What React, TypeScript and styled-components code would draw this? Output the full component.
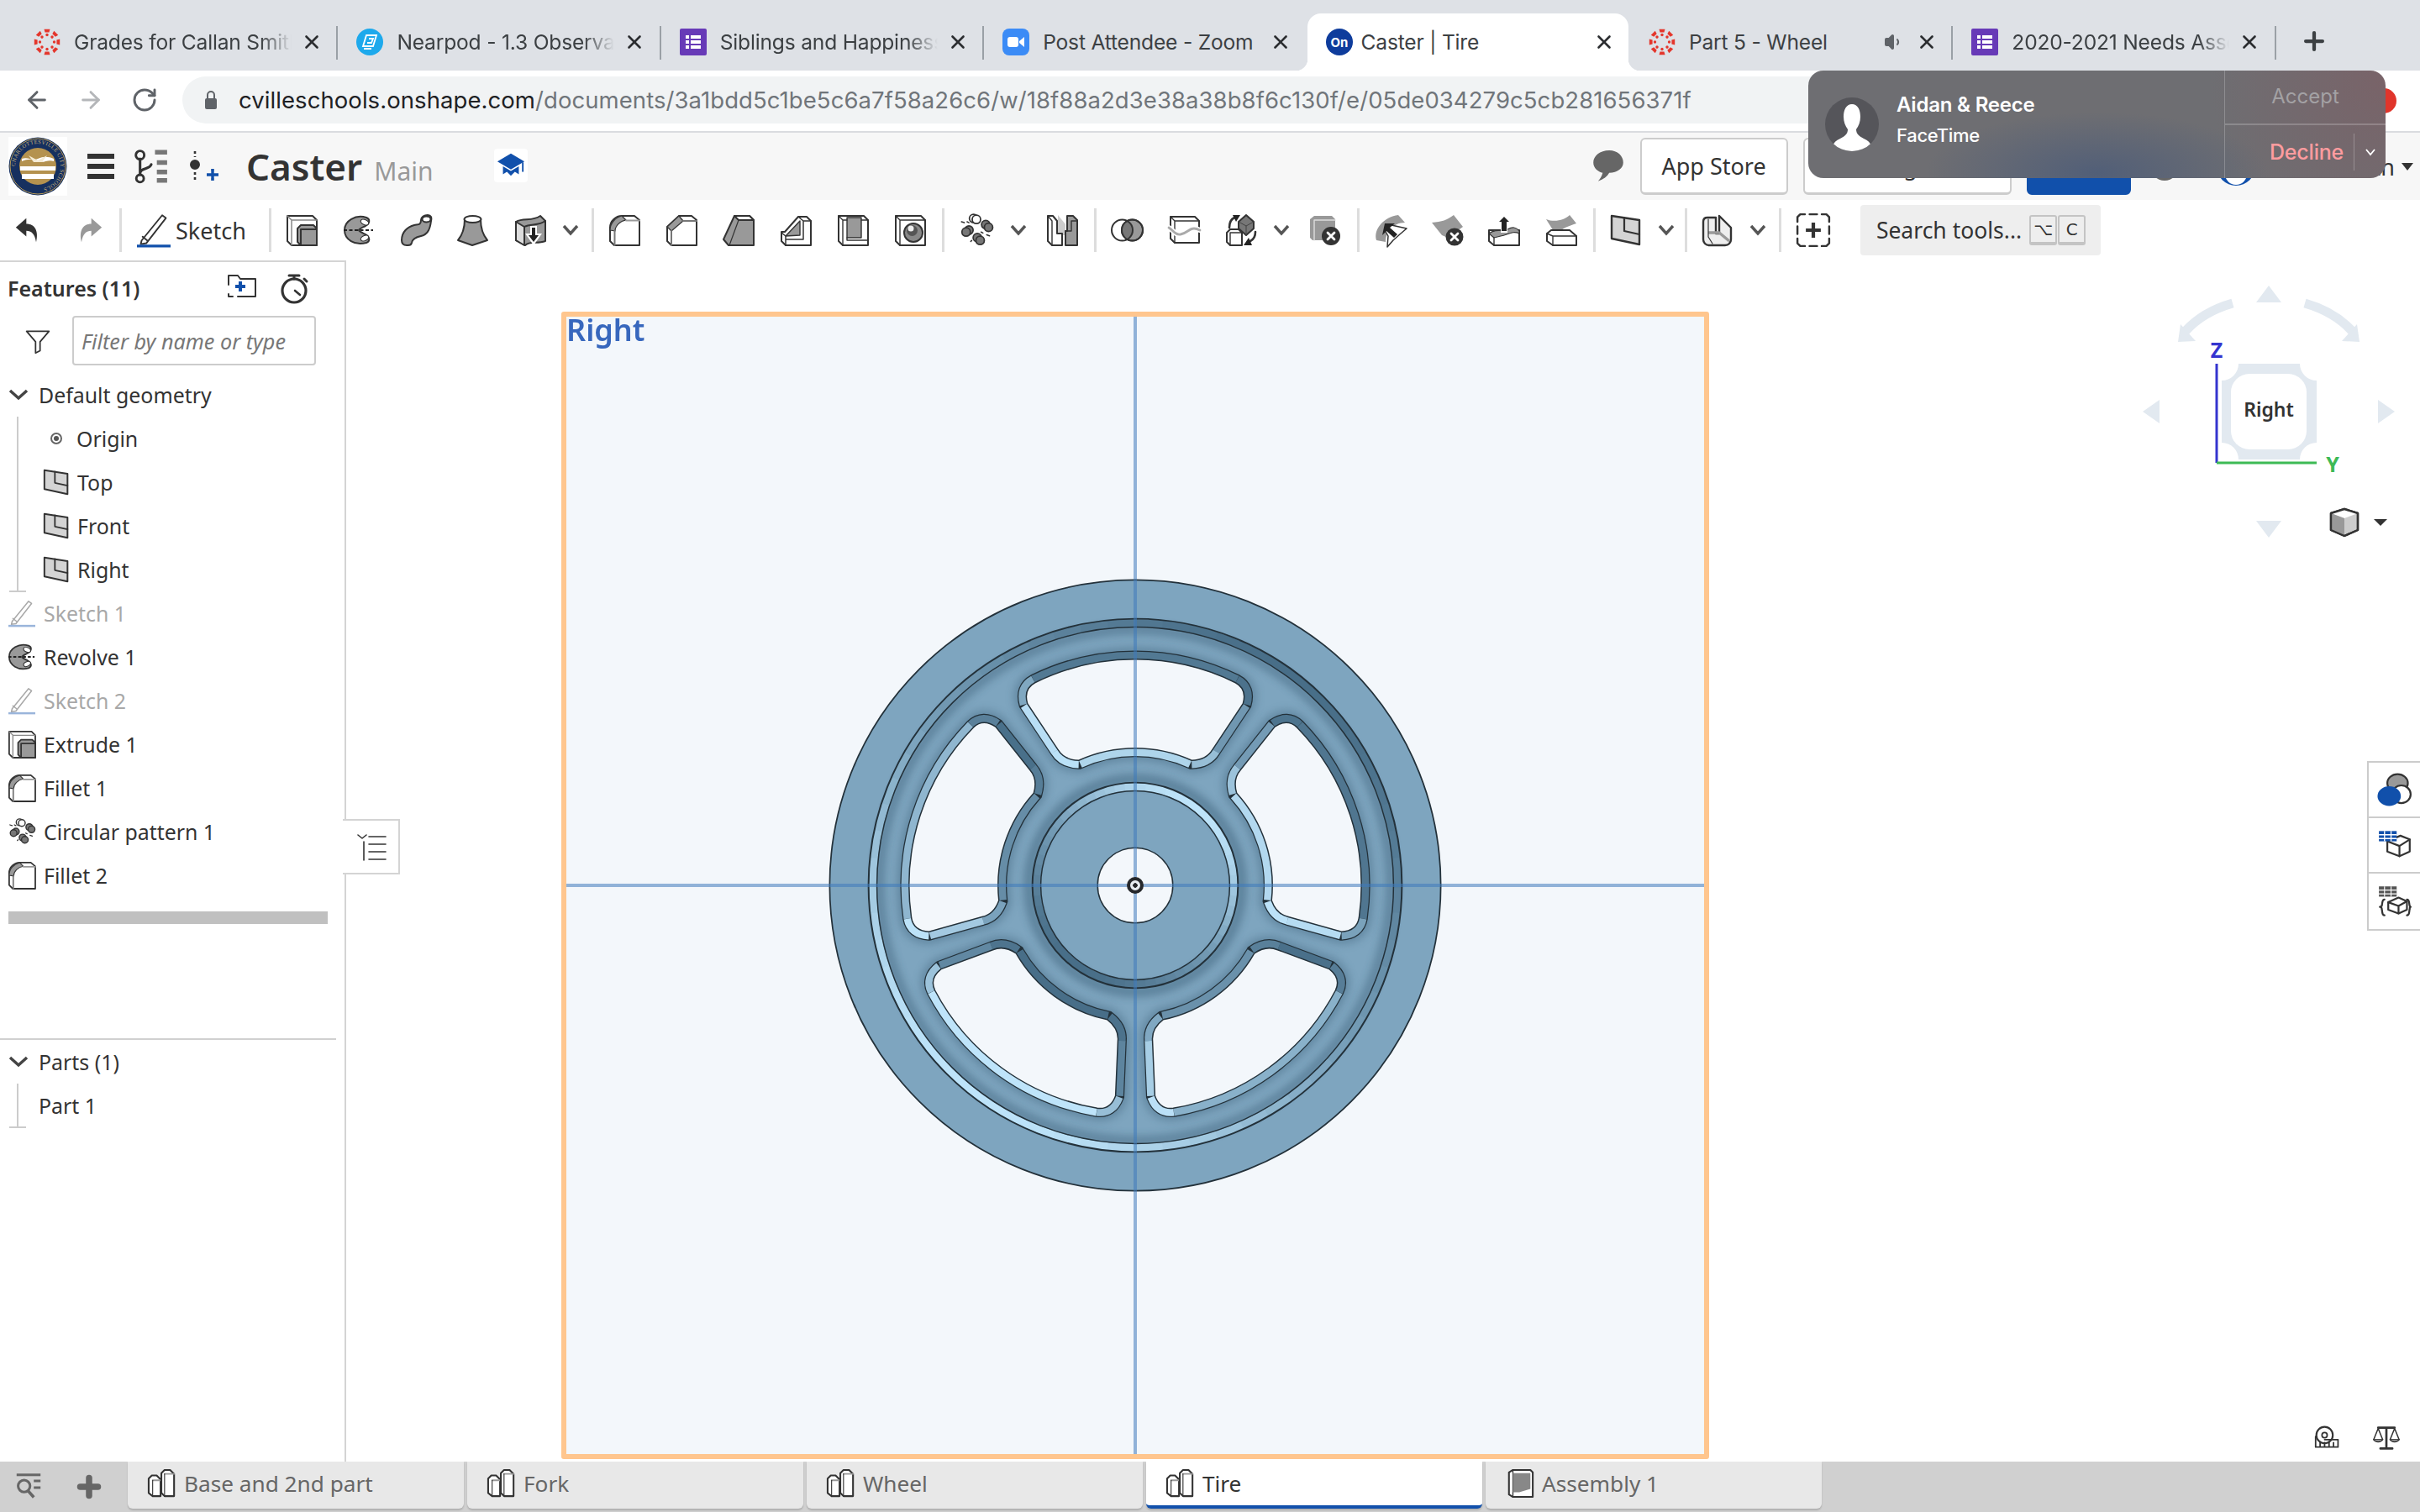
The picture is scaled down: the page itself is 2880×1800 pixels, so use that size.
import React, { ReactNode } from "react";
import styled, { createGlobalStyle } from "styled-components";
import { ArrowLeft, ArrowRight, RotateCw, X, Plus, Volume1 } from "lucide-react";

const GlobalStyle = createGlobalStyle`
  html, body { margin: 0; padding: 0; background: #fff; }
  body { font-family: "Noto Sans", "Liberation Sans", sans-serif; color: #333; }
  * { box-sizing: border-box; }
`;

const Page = styled.div`
  position: relative;
  display: flex;
  flex-direction: column;
  width: 2880px;
  height: 1800px;
  overflow: hidden;
`;

/* ---------- browser chrome ---------- */

const TabStrip = styled.div`
  display: flex;
  align-items: flex-end;
  flex: none;
  height: 84px;
  padding-left: 18px;
  background: #dee1e6;
  font-family: Inter, "Liberation Sans", sans-serif;
`;

const Tab = styled.div<{ $active?: boolean }>`
  position: relative;
  display: flex;
  align-items: center;
  flex: none;
  width: 382.400px;
  height: 68px;
  padding-left: 22px;
  gap: ${(p) => (p.$active ? 10 : 16)}px;
  border-radius: 16px 16px 0 0;
  background: ${(p) => (p.$active ? "#fff" : "transparent")};

  ${(p) =>
    p.$active &&
    `
    &::before, &::after {
      content: "";
      position: absolute;
      bottom: 0;
      width: 14px;
      height: 14px;
    }
    &::before { left: -14px; background: radial-gradient(circle at 0 0, transparent 14px, #fff 14.5px); }
    &::after { right: -14px; background: radial-gradient(circle at 100% 0, transparent 14px, #fff 14.5px); }
  `}
`;

const TabTitle = styled.span<{ $fade?: boolean; $width?: number }>`
  flex: none;
  width: ${(p) => p.$width ?? 259}px;
  overflow: hidden;
  white-space: nowrap;
  font-size: 24.600px;
  letter-spacing: -0.2px;
  color: #3c4043;
  ${(p) =>
    p.$fade &&
    `mask-image: linear-gradient(to right, #000 86%, transparent 100%);`}
`;

const TabClose = styled(X)<{ $nudge?: number }>`
  flex: none;
  margin-left: ${(p) => p.$nudge ?? -5}px;
  color: #2b2d30;
`;

const TabSound = styled(Volume1)`
  flex: none;
  color: #5f6368;
  fill: #5f6368;
`;

const TabDivider = styled.div<{ $off?: boolean }>`
  flex: none;
  width: 2px;
  height: 40px;
  margin-bottom: 13px;
  background: ${(p) => (p.$off ? "transparent" : "#9aa0a6")};
`;

const NewTab = styled(Plus)`
  flex: none;
  margin: 0 0 18px 28px;
  color: #3c4043;
`;

const AddressBar = styled.div`
  display: flex;
  align-items: center;
  flex: none;
  height: 74px;
  padding: 0 90px 2px 28px;
  background: #fff;
  border-bottom: 2px solid #dadce0;
`;

const NavButton = styled.div<{ $off?: boolean }>`
  display: flex;
  flex: none;
  width: 64px;
  color: ${(p) => (p.$off ? "#b4b6b9" : "#5f6368")};
`;

const UrlPill = styled.div`
  display: flex;
  align-items: center;
  flex: 1;
  height: 56px;
  margin-left: -3px;
  padding-left: 26px;
  gap: 25px;
  border-radius: 28px;
  background: #f1f3f4;
  font-family: Inter, "Liberation Sans", sans-serif;
`;

const Url = styled.span`
  font-size: 27.500px;
  letter-spacing: 0.07px;
  white-space: nowrap;
  color: #70757a;
`;

const UrlHost = styled.span`
  color: #202124;
`;

const ProfileDot = styled.div`
  position: absolute;
  top: 105px;
  left: 2822px;
  width: 30px;
  height: 30px;
  border-radius: 50%;
  background: #e0352b;
`;

/* ---------- facetime notification ---------- */

const Notification = styled.div`
  position: absolute;
  top: 84px;
  left: 2152px;
  display: flex;
  width: 687px;
  height: 128px;
  border-radius: 18px;
  overflow: hidden;
  color: #fff;
  font-family: Inter, "Liberation Sans", sans-serif;
  background:
    radial-gradient(circle at 100% 10%, rgba(128, 92, 98, 0.6), transparent 30%),
    radial-gradient(ellipse at 50% 95%, rgba(80, 94, 120, 0.95), transparent 42%),
    #6e6e72;
`;

const CallInfo = styled.div`
  display: flex;
  align-items: center;
  flex: 1;
  padding-left: 20px;
  gap: 21px;
`;

const Avatar = styled.div`
  display: flex;
  flex: none;
  width: 64px;
  height: 64px;
  border-radius: 50%;
  overflow: hidden;
  background: #55555a;
`;

const CallText = styled.div`
  display: flex;
  flex-direction: column;
  gap: 9px;
  margin-bottom: 12px;
`;

const Caller = styled.div`
  font-size: 24px;
  font-weight: 600;
  letter-spacing: -0.2px;
`;

const CallKind = styled.div`
  font-size: 22px;
  font-weight: 500;
  letter-spacing: -0.3px;
`;

const CallActions = styled.div`
  display: flex;
  flex-direction: column;
  flex: none;
  width: 192px;
  border-left: 1px solid rgba(255, 255, 255, 0.22);
`;

const AcceptCell = styled.div`
  display: flex;
  align-items: center;
  justify-content: center;
  flex: none;
  height: 65px;
  padding-bottom: 2px;
  border-bottom: 2px solid rgba(255, 255, 255, 0.2);
  font-size: 24px;
  color: #a3a1a4;
`;

const DeclineCell = styled.div`
  display: flex;
  align-items: center;
  flex: 1;
  padding-left: 53px;
  font-size: 25px;
  font-weight: 500;
  letter-spacing: -0.2px;
  color: #ff9c9f;
`;

const DeclineMenu = styled.div`
  display: flex;
  align-items: center;
  justify-content: center;
  width: 40px;
  height: 44px;
  margin-left: 12px;
  border-left: 1px solid rgba(255, 255, 255, 0.25);
`;

/* ---------- onshape header ---------- */

const DocHeader = styled.div`
  display: flex;
  align-items: center;
  flex: none;
  height: 80px;
  padding-left: 10px;
  background: #f7f7f7;
`;

const LogoBox = styled.div`
  display: flex;
  flex: none;
  width: 70px;
  height: 70px;
  background: #fff;
`;

const HeaderIcon = styled.div<{ $gap?: number }>`
  display: flex;
  flex: none;
  margin-left: ${(p) => p.$gap ?? 24}px;
`;

const DocTitle = styled.span`
  flex: none;
  margin-left: 31px;
  font-size: 44px;
  font-weight: 600;
  line-height: 1;
  color: #333;
`;

const Branch = styled.span`
  flex: none;
  align-self: center;
  margin: 10px 0 0 14px;
  font-size: 30px;
  color: #999;
`;

const CapBadge = styled.div`
  display: flex;
  align-items: center;
  justify-content: center;
  flex: none;
  width: 40px;
  height: 40px;
  margin: -2px 0 0 72px;
  border-radius: 4px;
  background: #fff;
`;

const HeaderRight = styled.div`
  display: flex;
  align-items: center;
  margin-left: auto;
  padding-right: 8px;
`;

const HeaderButton = styled.div<{ $width: number; $blue?: boolean }>`
  display: flex;
  align-items: center;
  justify-content: center;
  width: ${(p) => p.$width}px;
  height: 68px;
  margin-left: 18px;
  border: 2px solid ${(p) => (p.$blue ? "#1150ab" : "#ccc")};
  border-bottom-width: 3px;
  border-radius: 6px;
  background: ${(p) => (p.$blue ? "#1150ab" : "#fff")};
  font-size: 27px;
  color: #333;
`;

const UserName = styled.span`
  margin-left: 8px;
  font-size: 27px;
  white-space: nowrap;
  color: #333;
`;

const UserCaret = styled.div`
  width: 0;
  height: 0;
  margin-left: 8px;
  border-left: 7px solid transparent;
  border-right: 7px solid transparent;
  border-top: 9px solid #333;
`;

/* ---------- toolbar ---------- */

const Toolbar = styled.div`
  display: flex;
  align-items: center;
  flex: none;
  height: 72px;
  padding: 0 0 0 18px;
  background: #fff;
`;

const ToolGroup = styled.div<{ $gap?: number }>`
  display: flex;
  align-items: center;
  flex: none;
  gap: ${(p) => p.$gap ?? 32}px;
`;

const ToolSep = styled.div`
  flex: none;
  width: 3px;
  height: 52px;
  margin: 0 18px 0 20px;
  background: #ddd;
`;

const WithMenu = styled.div<{ $tail?: number }>`
  display: flex;
  align-items: center;
  flex: none;
  gap: 20px;
  margin-right: ${(p) => p.$tail ?? -8}px;
`;

const MenuChevron = styled.svg`
  flex: none;
  width: 20px;
  height: 14px;
  fill: none;
  stroke: #555;
  stroke-width: 3.400;
`;

const SketchLabel = styled.span`
  margin-left: 6px;
  margin-right: 7px;
  font-size: 27px;
  color: #333;
`;

const SearchBox = styled.div`
  display: flex;
  align-items: center;
  flex: none;
  width: 286px;
  height: 60px;
  margin-left: 36px;
  padding-left: 19px;
  border-radius: 4px;
  background: #eee;
  font-size: 26.500px;
  color: #333;
  white-space: nowrap;
`;

const KeyCap = styled.span<{ $first?: boolean }>`
  display: flex;
  align-items: center;
  justify-content: center;
  flex: none;
  width: 33px;
  height: 36px;
  margin-left: ${(p) => (p.$first ? 9 : 1)}px;
  border: 2px solid #c4c4c4;
  border-bottom-width: 4px;
  border-radius: 3px;
  font-family: "DejaVu Sans", sans-serif;
  font-size: 20px;
  color: #333;
`;

/* ---------- work area ---------- */

const Workspace = styled.div`
  display: flex;
  flex: 1;
  min-height: 0;
`;

const Panel = styled.aside`
  position: relative;
  z-index: 1;
  display: flex;
  flex-direction: column;
  flex: none;
  width: 412px;
  border-top: 2px solid #d4d4d4;
  border-right: 2px solid #d4d4d4;
  background: #fff;
`;

const PanelHead = styled.div`
  display: flex;
  align-items: center;
  flex: none;
  height: 64px;
  padding: 0 42px 0 9px;
`;

const PanelTitle = styled.span`
  flex: 1;
  margin-top: -2px;
  font-size: 25px;
  font-weight: 600;
  color: #333;
`;

const PanelTool = styled.span`
  display: flex;
  margin-left: 26px;
`;

const FilterRow = styled.div`
  display: flex;
  align-items: center;
  flex: none;
  height: 59px;
  margin-bottom: 9px;
  padding-left: 29px;
  gap: 25px;
`;

const FilterInput = styled.div`
  display: flex;
  align-items: center;
  width: 290px;
  height: 59px;
  padding-left: 9px;
  border: 2px solid #ccc;
  border-radius: 4px;
  font-size: 25.200px;
  font-style: italic;
  color: #777;
  white-space: nowrap;
`;

const Row = styled.div<{ $indent?: number; $dim?: boolean }>`
  display: flex;
  align-items: center;
  flex: none;
  height: 52px;
  padding-left: ${(p) => p.$indent ?? 10}px;
  gap: 10px;
  font-size: 24.900px;
  color: ${(p) => (p.$dim ? "#a8a8a8" : "#333")};
  white-space: nowrap;
`;

const Caret = styled.svg`
  flex: none;
  width: 24px;
  height: 14px;
  margin-right: 2px;
  fill: none;
  stroke: #444;
  stroke-width: 3.500;
`;

const TreeGroup = styled.div`
  position: relative;
  display: flex;
  flex-direction: column;
  margin-left: 20px;
  border-left: 2px solid #ccc;

  &::after {
    content: "";
    position: absolute;
    left: -11px;
    bottom: -1px;
    width: 20px;
    height: 2px;
    background: #ccc;
  }
`;

const OriginDot = styled.span`
  position: relative;
  flex: none;
  width: 14px;
  height: 14px;
  margin: 0 7px 0 8px;
  border: 2px solid #666;
  border-radius: 50%;

  &::after {
    content: "";
    position: absolute;
    inset: 2px;
    border-radius: 50%;
    background: #555;
  }
`;

const FeatureScroll = styled.div`
  flex: none;
  width: 380px;
  height: 15px;
  margin: 17px 0 136px 10px;
  background: #c0c0c0;
`;

const PartsDivider = styled.div`
  flex: none;
  width: 400px;
  height: 2px;
  background: #d0d0d0;
`;

const ListToggle = styled.div`
  position: absolute;
  top: 663px;
  left: 408px;
  display: flex;
  align-items: center;
  justify-content: center;
  width: 68px;
  height: 66px;
  padding-left: 2px;
  border: 2px solid #d4d4d4;
  border-left: 0;
  background: #fff;
`;

const Viewport = styled.main`
  position: relative;
  flex: 1;
  min-width: 0;
  background: #fff;
`;

const SketchPlane = styled.div`
  position: relative;
  display: flex;
  align-items: center;
  justify-content: center;
  width: 1366px;
  height: 1366px;
  margin: 61px 0 0 256px;
  border: 6px solid #ffc68e;
  border-radius: 3px;
  background: #f3f7fb;
`;

const PlaneName = styled.span`
  position: absolute;
  top: -9px;
  left: 0;
  font-size: 36px;
  font-weight: 600;
  color: #3767bd;
  filter: blur(0.6px);
`;

const AxisV = styled.div`
  position: absolute;
  top: 0;
  bottom: 0;
  left: 50%;
  width: 4px;
  margin-left: -2.500px;
  background: rgba(62, 122, 188, 0.55);
`;

const AxisH = styled.div`
  position: absolute;
  left: 0;
  right: 0;
  top: 50%;
  height: 4px;
  margin-top: -2px;
  background: rgba(62, 122, 188, 0.55);
`;

const OriginMark = styled.div`
  position: absolute;
  top: 50%;
  left: 50%;
  width: 20px;
  height: 20px;
  margin: -10px 0 0 -10.500px;
  border: 4px solid #26282b;
  border-radius: 50%;
  background: radial-gradient(circle, #26282b 0 2.5px, #e8edf2 3px);
`;

const WheelSvg = styled.svg`
  flex: none;
  width: 780px;
  height: 780px;
  filter: blur(0.5px);
`;

const CubeOverlay = styled.svg`
  position: absolute;
  top: 20px;
  right: 0;
  width: 380px;
  height: 340px;
  font-family: "Noto Sans", sans-serif;
`;

const SidePalette = styled.div`
  position: absolute;
  top: 596px;
  right: 0;
  display: flex;
  flex-direction: column;
  width: 63px;
  border: 2px solid #ccc;
  border-right: 0;
  background: #fff;
`;

const SideCell = styled.div<{ $last?: boolean }>`
  display: flex;
  align-items: center;
  justify-content: center;
  height: 66px;
  ${(p) => !p.$last && "border-bottom: 2px solid #ccc;"}
`;

const MeasureTools = styled.div`
  position: absolute;
  right: 24px;
  bottom: 12px;
  display: flex;
  gap: 38px;
`;

/* ---------- bottom tabs ---------- */

const BottomBar = styled.div`
  display: flex;
  align-items: flex-start;
  flex: none;
  height: 60px;
  background: #d0d0d0;
`;

const BarTools = styled.div`
  display: flex;
  align-items: center;
  flex: none;
  width: 152px;
  height: 60px;
  padding-left: 18px;
  gap: 38px;
  color: #666;
`;

const DocTab = styled.div<{ $active?: boolean }>`
  display: flex;
  align-items: center;
  flex: none;
  width: 400px;
  height: 56px;
  margin-right: 4px;
  padding: 0 0 ${(p) => (p.$active ? 0 : 4)}px 24px;
  gap: 9px;
  border-radius: 0 0 6px 6px;
  background: ${(p) => (p.$active ? "#fff" : "#e8e8e8")};
  border-bottom: ${(p) => (p.$active ? "4px solid #1150ab" : "0")};
  box-shadow: 0 2px 2px rgba(0, 0, 0, 0.16);
  font-size: 26.200px;
  color: ${(p) => (p.$active ? "#333" : "#666")};
`;

const GlyphSvg = styled.svg<{ $faded?: boolean }>`
  flex: none;
  fill: none;
  stroke: #333;
  stroke-width: 2;
  stroke-linejoin: round;
  stroke-linecap: round;
  overflow: visible;
  ${(p) => p.$faded && "opacity: 0.42;"}
`;

/* ---------- icons ---------- */

const G = "#999";

const closeBadge = (cx: number, cy: number, r: number) => (
  <>
    <circle cx={cx} cy={cy} r={r} fill="#333" stroke="none" />
    <path d={`M${cx - 4} ${cy - 4}l8 8m0-8-8 8`} stroke="#fff" strokeWidth="2.8" />
  </>
);

const glyphs: Record<string, ReactNode> = {
  undo: <path d="M1 14 16 1v8c12 0 18 10 14 26-2-12-7-16-14-16v8z" fill="#333" stroke="none" />,
  redo: <path d="M35 14 20 1v8C8 9 2 19 6 35c2-12 7-16 14-16v8z" fill={G} stroke="none" />,
  sketch: (
    <>
      <path d="M5 29 27 2l4 3L10 32l-6 1z" fill="#fff" strokeWidth="1.700" />
      <path d="M6 25l5 4" strokeWidth="1.700" />
      <path d="M0 35h36" stroke="#1150ab" strokeWidth="2.800" strokeLinecap="butt" />
    </>
  ),
  extrude: (
    <>
      <path d="M1 1H31L36 6V36H6L1 31Z" fill="#fff" />
      <path d="M6 6H36M6 6V36M1 1 6 6" stroke="#888" strokeWidth="1.500" />
      <path d="M13 16L17 12H32L36 16V36H17L13 32Z" fill={G} />
      <path d="M17 17H36M17 17V36" />
    </>
  ),
  revolve: (
    <>
      <path d="M27 3C14-1 1 7 1 18s12 19 26 15c5-2 4-7-1-10-4-2-7-3-8-5 1-2 4-3 8-5 5-3 6-8 1-10z" fill={G} />
      <ellipse cx="25" cy="8.500" rx="5" ry="3" transform="rotate(25 25 8.500)" fill="#fff" strokeWidth="1.200" />
      <ellipse cx="25" cy="27.500" rx="5" ry="3" transform="rotate(-25 25 27.500)" fill="#fff" strokeWidth="1.200" />
      <path d="M0 18H35" strokeDasharray="4 2.500" strokeLinecap="butt" stroke="#222" />
    </>
  ),
  sweep: (
    <>
      <path d="M1 30C1 20 8 14 16 12c5-1 8 0 8-6 0-4 4-6 8-6s5 3 4 7c-1 8-3 16-12 18-5 1-10 3-11 8-1 4-4 3-6 3-4 0-6-2-6-6z" fill={G} />
      <ellipse cx="30.500" cy="5" rx="5" ry="3.500" fill="#fff" />
    </>
  ),
  loft: (
    <>
      <path d="M8 5C8 15 5 24 0 30l17 6 18-6c-5-6-8-15-8-25" fill={G} />
      <ellipse cx="17.500" cy="5" rx="10" ry="4" fill="#fff" />
    </>
  ),
  thicken: (
    <>
      <path d="M1 8C10 3 20 8 30 1l6 6v24c-10 4-18-1-24 5L1 30z" fill={G} />
      <path d="M1 8 11 14V36L1 30z" fill="#ddd" />
      <path d="M11 14C18 10 28 13 36 7" />
      <path d="M18 13h8v9h6L22 36 12 22h6z" fill="#fff" stroke="none" />
      <path d="M20 15h4v9h4l-6 8-6-8h4z" fill="#222" stroke="none" />
    </>
  ),
  fillet: (
    <>
      <path d="M1 15C1 7 8 1 15 1H30L36 6V36H6L1 31Z" fill="#fff" />
      <path d="M1 18C1 10 7 3 15 1L20 6C13 7 7 13 7 19Z" fill={G} strokeWidth="1.200" />
      <path d="M20 6.500H36" stroke="#999" />
      <path d="M6.500 19V36" stroke="#777" />
    </>
  ),
  chamfer: (
    <>
      <path d="M1 14 15 1H30L36 6V36H6L1 31Z" fill="#fff" />
      <path d="M1 14 15 1 20 7 6 19Z" fill={G} strokeWidth="1.200" />
      <path d="M20 7H36M6 19V36" stroke="#777" />
    </>
  ),
  draft: (
    <>
      <path d="M0 29 13 1H31L36 6V36H6Z" fill={G} />
      <path d="M13 1H31L36 6H18Z" fill="#fff" />
      <path d="M18 6 7 36" strokeWidth="1.200" />
    </>
  ),
  rib: (
    <>
      <path d="M1 20H5L21 2H31L36 7V36H6L1 31Z" fill="#fff" />
      <path d="M6 25 23 7v17z" fill={G} strokeWidth="1.400" />
      <path d="M1 21 6 25V36M6 29H27V7H36M21 2l6 5" strokeWidth="1.500" />
    </>
  ),
  shell: (
    <>
      <path d="M1 1H31L36 6V36H6L1 31Z" fill="#fff" />
      <path d="M11 3H28V27H11Z" fill={G} strokeWidth="1.400" />
      <path d="M6 6V36M1 1 6 6M6 6H11M28 6H36M11 27 11 30H36" strokeWidth="1.400" />
    </>
  ),
  hole: (
    <>
      <path d="M1 1H31L36 6V36H6L1 31Z" fill="#fff" />
      <path d="M6 6H36M6 6V36M1 1 6 6" strokeWidth="1.400" />
      <circle cx="22" cy="21" r="11" fill="#888" />
      <circle cx="20.500" cy="18.500" r="6.500" fill="#555" stroke="none" />
      <circle cx="19" cy="16" r="3.500" fill="#eee" stroke="none" />
    </>
  ),
  pattern: (
    <g strokeWidth="1.600">
      <circle cx="15" cy="5.500" r="4.500" fill="#fff" />
      <circle cx="18" cy="6.500" r="4.500" fill="#fff" />
      <circle cx="28" cy="12" r="4.500" fill="#777" />
      <circle cx="31" cy="15" r="4.500" fill="#777" />
      <circle cx="10" cy="18" r="4.500" fill="#777" />
      <circle cx="7" cy="20" r="4.500" fill="#777" />
      <circle cx="19" cy="26" r="4.500" fill="#777" />
      <circle cx="22" cy="29" r="4.500" fill="#777" />
      <path d="M2 9l3 1M8 9l2 1M23 20l2 1M29 23l3 1M13 29l-1 1" strokeWidth="1.400" />
    </g>
  ),
  mirror: (
    <>
      <path d="M13 0 22 11V24H13z" fill="#ccc" stroke="none" />
      <path d="M1 1H7L12 7V22H18V36H6L1 31Z" fill="#fff" />
      <path d="M6 7V36M1 1 6 7" strokeWidth="1.400" />
      <path d="M24 1H31L36 6V36H22V19H24Z" fill={G} />
      <path d="M29 7H36M29 7V19H22" strokeWidth="1.400" />
    </>
  ),
  boolean: (
    <>
      <circle cx="24.500" cy="18" r="12.500" fill={G} />
      <path d="M18.500 7A12.500 12.500 0 0 0 18.500 29 12.500 12.500 0 0 0 18.500 7Z" fill="#777" stroke="none" />
      <circle cx="12.500" cy="18" r="12.500" />
      <circle cx="24.500" cy="18" r="12.500" />
    </>
  ),
  split: (
    <>
      <path d="M2 2H31L36 7V33H7L2 28Z" fill="#fff" />
      <path d="M7 7H36M7 7V33M2 2 7 7" strokeWidth="1.400" />
      <path d="M0 15c6 4 8 9 14 8 7-1 10-7 16-7 3 0 5 1 7 2" stroke="#fff" strokeWidth="6" />
      <path d="M0 15c6 4 8 9 14 8 7-1 10-7 16-7 3 0 5 1 7 2" stroke="#aaa" strokeWidth="2.800" />
    </>
  ),
  transform: (
    <>
      <path d="M1 21 5 17H15L19 21V36H5L1 32Z" fill="#fff" />
      <path d="M5 21H19M5 21V36" strokeWidth="1.400" />
      <path d="M24 0 33 8V16L24 24 15 16V8Z" fill="#777" />
      <path d="M15 8 24 13 33 8M24 13V24" strokeWidth="1" stroke="#444" />
      <path d="M4 15C4 9 6 5 10 3" strokeWidth="2.600" />
      <path d="M8 0H17L12 8Z" fill="#222" stroke="none" />
      <path d="M35 20C35 25 33 29 29 31" strokeWidth="2.600" />
      <path d="M31 36H21L27 27Z" fill="#222" stroke="none" />
    </>
  ),
  deletePart: (
    <>
      <path d="M0 5 5 1H26L30 5V30H3L0 27Z" fill={G} stroke="none" />
      <path d="M5 6H30M5 6V30" stroke="#ddd" strokeWidth="1.400" />
      {closeBadge(25, 25, 11)}
    </>
  ),
  modify: (
    <>
      <path d="M2 30C-2 16 12 2 28 0l8 9C22 9 13 20 13 32z" fill={G} stroke="none" />
      <path d="M20 12 38 16 31 22 22 30 15 38 16 25 12 18z" fill="#fff" strokeWidth="1.500" />
      <path d="M12 10H24L18 15 27 23 23 27 14 19 9 24Z" fill="#222" stroke="none" />
    </>
  ),
  deleteFace: (
    <>
      <path d="M0 9C12 8 18 6 26 0L37 14 26 22V30L12 24z" fill={G} stroke="none" />
      {closeBadge(27, 26, 10.500)}
    </>
  ),
  moveFace: (
    <>
      <path d="M0 23V31L6 36H36V18H0z" fill="#fff" />
      <path d="M0 22C8 15 14 21 22 17 28 14 32 14 36 19V22C28 18 22 24 14 25L6 27Z" fill={G} strokeWidth="1.200" />
      <path d="M6 27V36" strokeWidth="1.400" />
      <path d="M18 0 27 9H22V21H14V9H9Z" fill="#fff" stroke="none" />
      <path d="M18 2 24 8H21V19H15V8H12Z" fill="#222" stroke="none" />
    </>
  ),
  replaceFace: (
    <>
      <path d="M0 5C10 9 22 6 28 0L36 10C28 13 18 15 12 24z" fill={G} stroke="none" />
      <path d="M1 22 6 18H28L36 25V36H8L1 31Z" fill="#fff" />
      <path d="M8 25H36M8 25V36M1 22 8 25" strokeWidth="1.400" />
    </>
  ),
  plane: (
    <>
      <path d="M1 1 34 6V35L1 28Z" fill="#d4d4d4" strokeWidth="2.400" />
      <path d="M16 3V19L34 23" strokeWidth="2.200" />
    </>
  ),
  variable: (
    <>
      <path d="M1 8C1 4 3 3 6 3H16V22H20V1L34 15V29C34 33 31 36 27 36H8C4 36 1 33 1 29Z" fill="#eee" strokeWidth="2.400" />
      <path d="M7 21H20L32 31" stroke={G} strokeWidth="3.400" strokeLinecap="butt" />
      <path d="M7 5V26L12 34" strokeWidth="1.200" />
    </>
  ),
  mate: (
    <>
      <path d="M1 9V4L4 1H9M27 1H32L35 4V9M35 27V32L32 35H27M9 35H4L1 32V27M14 1H22M1 14V22M35 14V22M14 35H22" strokeWidth="2.200" />
      <path d="M18 10V26M10 18H26" strokeWidth="3.800" strokeLinecap="butt" />
    </>
  ),
  studio: (
    <>
      <path d="M1 12 5 8H11L16 13V34H6L1 30Z" fill="#fff" strokeWidth="2.200" />
      <path d="M6 14H16" stroke={G} strokeWidth="2" />
      <path d="M6 14V34" strokeWidth="1.200" />
      <path d="M17 5 21 1H28L33 6V34H21L17 30Z" fill="#fff" strokeWidth="2.200" />
      <path d="M21 6H33" stroke={G} strokeWidth="2" />
      <path d="M21 6V34" strokeWidth="1.200" />
    </>
  ),
  assembly: (
    <>
      <path d="M4 4 9 1H31L34 4V35H9L4 32Z" fill="#fff" strokeWidth="2.200" />
      <path d="M9 1V35" strokeWidth="1.400" />
      <path d="M9 5H31V25L17 29H9Z" fill="#888" stroke="none" />
    </>
  ),
  folderPlus: (
    <>
      <path d="M2 13V2H13L16 6H34V27H13" />
      <path d="M2 24V27H7" />
      <path d="M10 15H22M16 9V21" stroke="#1150ab" strokeWidth="4" strokeLinecap="butt" />
    </>
  ),
  timer: (
    <>
      <circle cx="18" cy="20" r="14" strokeWidth="3.200" />
      <path d="M12 2H24M18 2V6M30 6 33 9" strokeWidth="3" />
      <path d="M19 20 25 25" strokeWidth="2.600" />
    </>
  ),
  funnel: <path d="M3 5H33L21 19V31L15 34V19Z" strokeWidth="2" fill="#fff" />,
  listToggle: <path d="M2 4 7 8 12 4M9 12V34M15 6H35M15 15H35M15 24H35M15 33H35" strokeWidth="1.600" />,
  tree: (
    <>
      <circle cx="6" cy="6" r="4.500" strokeWidth="2.600" />
      <circle cx="6" cy="31" r="4" strokeWidth="2.600" />
      <path d="M6 10V27M6 26C6 19 16 22 18 16" strokeWidth="2.800" />
      <path d="M22 3H35M24 14H35M24 24H35M24 33H35" stroke="#777" strokeWidth="5" strokeLinecap="butt" />
    </>
  ),
  insert: (
    <>
      <path d="M6 0V7M6 25V36M27 21V25M27 32V36" strokeDasharray="3 3" strokeWidth="2.600" strokeLinecap="butt" />
      <circle cx="6" cy="16" r="5" fill="#333" />
      <path d="M20 28H34M27 21V35" stroke="#1150ab" strokeWidth="3.400" strokeLinecap="butt" />
    </>
  ),
  chat: <path d="M19 1C9 1 2 7 2 14c0 6 5 10 10 11-1 4-3 7-5 9 6-2 10-5 12-9 9 0 15-5 15-11C34 7 28 1 19 1z" fill="#666" stroke="none" />,
  search: (
    <g stroke="#666" strokeLinecap="butt">
      <path d="M2 2H34" strokeWidth="3.400" />
      <circle cx="12" cy="17" r="8" strokeWidth="3.400" />
      <path d="M17 23 25 32" strokeWidth="4" />
      <path d="M25 10H34M25 19H34" strokeWidth="3.400" />
    </g>
  ),
  appearance: (
    <>
      <ellipse cx="21" cy="11" rx="11" ry="9.500" fill={G} />
      <ellipse cx="25" cy="23" rx="10" ry="9.500" fill="#fff" />
      <ellipse cx="12" cy="25" rx="11.500" ry="9.500" fill="#1150ab" stroke="#1150ab" />
    </>
  ),
  partTable: (
    <>
      <path d="M10 14 24 8 34 12V25L23 30 10 25Z" fill="#fff" />
      <path d="M10 14 23 19 34 12M23 19V30" />
      <path d="M1 3H20V14H1Z" fill="#1150ab" stroke="none" />
      <path d="M1 7H20M1 11H20M7 3V14M14 3V14" stroke="#fff" strokeWidth="1.200" strokeLinecap="butt" />
    </>
  ),
  configTable: (
    <>
      <path d="M11 19 22 14 31 18V27L22 31 11 27Z" fill="#fff" />
      <path d="M11 19 22 23 31 18M22 23V31" />
      <path d="M7 16C4 16 5 20 4 23 3 24 2 24 2 24 3 24 4 25 4 26 5 30 4 33 7 33M31 16C34 16 33 20 34 23 35 24 35 24 35 24 34 24 34 25 34 26 33 30 34 33 31 33" />
      <path d="M1 2H20V13H1Z" fill="#555" stroke="none" />
      <path d="M1 6H20M1 10H20M7 2V13M14 2V13" stroke="#fff" strokeWidth="1" strokeLinecap="butt" />
    </>
  ),
  ruler: (
    <>
      <circle cx="14" cy="14" r="11" strokeWidth="2.400" fill="#fff" />
      <circle cx="14" cy="14" r="3.500" />
      <path d="M2 16V30H32V20H14M8 24V30M14 24V30M20 24V30M26 24V30" />
    </>
  ),
  balance: (
    <>
      <path d="M7 4H29M18 4V30M10 32H26" strokeWidth="3" />
      <path d="M7 5 1 20H13ZM29 5 23 20H35Z" strokeWidth="1.700" />
      <path d="M1 20C3 24 11 24 13 20M23 20C25 24 33 24 35 20" fill={G} strokeWidth="1.700" />
    </>
  ),
  cube: (
    <>
      <path d="M2 7 18 2 34 7V27L18 34 2 27Z" fill="#ccc" strokeWidth="2.400" />
      <path d="M2 7 18 13 34 7 18 2Z" fill="#fff" stroke="none" />
      <path d="M2 7 18 13V34L2 27Z" fill={G} stroke="none" />
      <path d="M2 7 18 2 34 7V27L18 34 2 27Z" strokeWidth="2.400" />
    </>
  ),
};

const Glyph = ({ name, size = 36, faded }: { name: string; size?: number; faded?: boolean }) => (
  <GlyphSvg viewBox="0 0 36 36" width={size} height={size} $faded={faded}>
    {glyphs[name]}
  </GlyphSvg>
);

const Chevron = () => (
  <MenuChevron viewBox="0 0 20 14">
    <path d="M2 2l8 9 8-9" />
  </MenuChevron>
);

const FaviconSvg = styled.svg`
  flex: none;
`;

const CanvasIcon = () => (
  <FaviconSvg width="32" height="32" viewBox="0 0 32 32">
    <g fill="#e4362c">
      {[0, 45, 90, 135, 180, 225, 270, 315].map((a) => (
        <g key={a} transform={`rotate(${a} 16 16)`}>
          <circle cx="16" cy="7.500" r="1.700" />
          <path d="M12.500 0.800h7l-1 3.800h-5z" />
        </g>
      ))}
    </g>
  </FaviconSvg>
);

const NearpodIcon = () => (
  <FaviconSvg width="32" height="32" viewBox="0 0 32 32">
    <circle cx="16" cy="16" r="16" fill="#1da9ec" />
    <path d="M12 8h12l-4 13H8zM15 12h5l-2 5h-5M9 24h9" fill="none" stroke="#fff" strokeWidth="1.800" />
  </FaviconSvg>
);

const FormsIcon = () => (
  <FaviconSvg width="32" height="32" viewBox="0 0 32 32">
    <rect width="32" height="32" rx="2" fill="#673ab7" />
    <path d="M7 8h4v4H7zM7 14h4v4H7zM7 20h4v4H7z" fill="#fff" />
    <path d="M13 8h12v4H13zM13 14h12v4H13zM13 20h12v4H13z" fill="#fff" />
  </FaviconSvg>
);

const ZoomIcon = () => (
  <FaviconSvg width="32" height="32" viewBox="0 0 32 32">
    <rect width="32" height="32" rx="8" fill="#3b8bf6" />
    <rect x="6" y="10" width="13" height="12" rx="3" fill="#fff" />
    <path d="M20 15l6-5v12l-6-5z" fill="#fff" />
  </FaviconSvg>
);

const OnshapeIcon = () => (
  <FaviconSvg width="32" height="32" viewBox="0 0 32 32">
    <circle cx="16" cy="16" r="16" fill="#0e3c9c" />
    <text x="16" y="21.500" textAnchor="middle" fontSize="15" fontWeight="700" fill="#fff" fontFamily="Inter, sans-serif">
      On
    </text>
  </FaviconSvg>
);

const SchoolSeal = () => (
  <svg viewBox="0 0 70 70" width="70" height="70">
    <circle cx="35" cy="35" r="34.500" fill="#16305f" />
    <circle cx="35" cy="35" r="33" fill="none" stroke="#b89a57" strokeWidth="1" />
    <defs>
      <path id="sealRing" d="M35 35m-27 0a27 27 0 1 1 54 0a27 27 0 1 1 -54 0" />
    </defs>
    <text fontSize="6.500" fill="#c8b27a" fontFamily="Liberation Serif, serif" letterSpacing="0.4">
      <textPath href="#sealRing">CHARLOTTESVILLE CITY SCHOOLS</textPath>
    </text>
    <circle cx="35" cy="35" r="22" fill="#b4924f" />
    <path d="M16 26c7-3 12 3 19 0s12-3 19 0v3c-7-3-12 3-19 0s-12-3-19 0z" fill="#fff" />
    <path d="M14 35h42v5H14zM16 44h38v6H16z" fill="#fff" />
    <path d="M24 22l11 6 11-6-6 8h-10z" fill="#f4ead2" />
  </svg>
);

const GradCap = () => (
  <svg width="34" height="34" viewBox="0 0 36 36">
    <path d="M18 3 35 13 18 23 1 13z" fill="#1150ab" />
    <path d="M8 19v10l5-3 5 5 5-5 5 3V19l-10 6z" fill="#1150ab" />
    <path d="M33 14v12" stroke="#1150ab" strokeWidth="2" />
  </svg>
);

/* ---------- wheel ---------- */

const dark = [72, 110, 136];
const mid = [118, 158, 184];
const light = [190, 228, 250];

// colour of a fillet facing direction (nx, ny), light comes from the lower left
const shade = (nx: number, ny: number) => {
  const t = Math.max(0, Math.min(1, (nx * -0.62 + ny * 0.78 + 1) / 2));
  const [a, b, k] = t < 0.5 ? [dark, mid, t * 2] : [mid, light, (t - 0.5) * 2];
  const c = a.map((v, i) => Math.round(v + (b[i] - v) * k));
  return `rgb(${c[0]},${c[1]},${c[2]})`;
};

const holePath =
  "M-240 -485A542 542 0 0 1 240 -485Q268 -470 258 -435L185 -325Q170 -300 135 -299A328 328 0 0 0 -135 -299Q-170 -300 -185 -325L-258 -435Q-268 -470 -240 -485Z";

const holeEdges: { d: string; n: [number, number] }[] = [
  { d: "M-240 -485A542 542 0 0 1 240 -485", n: [0, -1] },
  { d: "M240 -485Q268 -470 258 -435", n: [0.85, -0.5] },
  { d: "M258 -435L185 -325", n: [0.85, 0.5] },
  { d: "M185 -325Q170 -300 135 -299", n: [0.4, 0.9] },
  { d: "M135 -299A328 328 0 0 0 -135 -299", n: [0, 1] },
  { d: "M-135 -299Q-170 -300 -185 -325", n: [-0.4, 0.9] },
  { d: "M-185 -325L-258 -435", n: [-0.85, 0.5] },
  { d: "M-258 -435Q-268 -470 -240 -485", n: [-0.85, -0.5] },
];

const spin = ([x, y]: [number, number], deg: number): [number, number] => {
  const r = (deg * Math.PI) / 180;
  return [x * Math.cos(r) - y * Math.sin(r), x * Math.sin(r) + y * Math.cos(r)];
};

const ringArcs = (radius: number, width: number, sign: number) =>
  Array.from({ length: 60 }, (_, i) => {
    const a0 = (i * 6 * Math.PI) / 180;
    const a1 = ((i + 1.1) * 6 * Math.PI) / 180;
    const d = `M${radius * Math.cos(a0)} ${radius * Math.sin(a0)}A${radius} ${radius} 0 0 1 ${radius * Math.cos(a1)} ${radius * Math.sin(a1)}`;
    const mida = (a0 + a1) / 2;
    return <path key={i} d={d} fill="none" strokeWidth={width} stroke={shade(sign * Math.cos(mida), sign * Math.sin(mida))} />;
  });

const Wheel = () => (
  <WheelSvg viewBox="0 0 1568 1568">
    <defs>
      <filter id="soft" x="-20%" y="-20%" width="140%" height="140%">
        <feGaussianBlur stdDeviation="11" />
      </filter>
    </defs>
    <g transform="translate(784 784)">
      <circle r="731" fill="#7ea5bf" stroke="#23313a" strokeWidth="3.500" />
      <circle r="612" fill="none" stroke="#2c4e66" strokeWidth="20" opacity="0.45" filter="url(#soft)" />
      <circle r="254" fill="none" stroke="#2c4e66" strokeWidth="24" opacity="0.45" filter="url(#soft)" />
      {[0, 72, 144, 216, 288].map((a) => (
        <path key={a} d={holePath} transform={`rotate(${a})`} fill="none" stroke="#2c4e66" strokeWidth="58" opacity="0.34" filter="url(#soft)" />
      ))}

      <g>{ringArcs(628, 18, 1)}</g>
      <circle r="638" fill="none" stroke="#23313a" strokeWidth="4" />
      <circle r="618" fill="none" stroke="#23313a" strokeWidth="3" />

      <g>{ringArcs(236, 18, -1)}</g>
      <circle r="246" fill="none" stroke="#23313a" strokeWidth="4" />
      <circle r="226" fill="none" stroke="#23313a" strokeWidth="3" />

      {[0, 72, 144, 216, 288].map((a) => (
        <g key={a} transform={`rotate(${a})`}>
          <path d={holePath} fill="none" stroke="#23313a" strokeWidth="42" />
          {holeEdges.map((e) => (
            <path key={e.d} d={e.d} fill="none" strokeWidth="37" stroke={shade(...spin(e.n, a))} />
          ))}
          <path d={holePath} fill="#f3f7fb" stroke="#23313a" strokeWidth="3" />
        </g>
      ))}

      <circle r="90" fill="#f3f7fb" stroke="#23313a" strokeWidth="3" />
    </g>
  </WheelSvg>
);

const ViewCube = () => (
  <CubeOverlay viewBox="2500 330 380 340">
    <g fill="#e2e9f0">
      <path d="M2685 360l15-20 15 20z" />
      <path d="M2685 620l15 20 15-20z" />
      <path d="M2570 476l-20 14 20 14z" />
      <path d="M2830 476l20 14-20 14z" />
      <path d="M2592 407l3-21 18 20z" />
      <path d="M2808 407l-3-21-18 20z" />
      <path d="M2657 361Q2622 371 2601 394" fill="none" stroke="#e2e9f0" strokeWidth="11" />
      <path d="M2743 361Q2778 371 2799 394" fill="none" stroke="#e2e9f0" strokeWidth="11" />
      <path d="M2664 433H2737A20 20 0 0 0 2757 453V527A20 20 0 0 0 2737 547H2664A20 20 0 0 0 2644 527V453A20 20 0 0 0 2664 433Z" />
    </g>
    <rect x="2655" y="445" width="90" height="90" rx="22" fill="#fff" />
    <path d="M2638 433V551" stroke="#3434cf" strokeWidth="3" />
    <path d="M2638 551H2757" stroke="#3dba55" strokeWidth="3" />
    <text x="2638" y="426" textAnchor="middle" fontSize="25" fontWeight="700" fill="#3434cf">
      Z
    </text>
    <text x="2776" y="562" textAnchor="middle" fontSize="25" fontWeight="700" fill="#3dba55">
      Y
    </text>
    <text x="2700" y="496" textAnchor="middle" fontSize="23" fontWeight="600" fill="#333">
      Right
    </text>
    <svg x="2772" y="604" width="36" height="36" viewBox="0 0 36 36" fill="none" stroke="#333" strokeLinejoin="round">
      {glyphs.cube}
    </svg>
    <path d="M2825 618h16l-8 8z" fill="#333" />
  </CubeOverlay>
);

/* ---------- data ---------- */

const browserTabs = [
  { icon: <CanvasIcon />, title: "Grades for Callan Smith", fade: true },
  { icon: <NearpodIcon />, title: "Nearpod - 1.3 Observations", fade: true },
  { icon: <FormsIcon />, title: "Siblings and Happiness", fade: true },
  { icon: <ZoomIcon />, title: "Post Attendee - Zoom" },
  { icon: <OnshapeIcon />, title: "Caster | Tire", active: true },
  { icon: <CanvasIcon />, title: "Part 5 - Wheel", sound: true },
  { icon: <FormsIcon />, title: "2020-2021 Needs Assessment", fade: true },
];

const features = [
  { icon: "sketch", label: "Sketch 1", dim: true },
  { icon: "revolve", label: "Revolve 1" },
  { icon: "sketch", label: "Sketch 2", dim: true },
  { icon: "extrude", label: "Extrude 1" },
  { icon: "fillet", label: "Fillet 1" },
  { icon: "pattern", label: "Circular pattern 1" },
  { icon: "fillet", label: "Fillet 2" },
];

const studioTabs = [
  { icon: "studio", label: "Base and 2nd part" },
  { icon: "studio", label: "Fork" },
  { icon: "studio", label: "Wheel" },
  { icon: "studio", label: "Tire", active: true },
  { icon: "assembly", label: "Assembly 1" },
];

export default function App() {
  return (
    <Page>
      <GlobalStyle />

      <TabStrip>
        {browserTabs.map((t, i) => (
          <React.Fragment key={t.title}>
            <Tab $active={t.active}>
              {t.icon}
              <TabTitle $fade={t.fade} $width={t.sound ? 216 : t.active ? 271 : 259}>
                {t.title}
              </TabTitle>
              {t.sound && <TabSound size={24} />}
              <TabClose size={26} strokeWidth={2.4} $nudge={t.sound ? -2 : undefined} />
            </Tab>
            <TabDivider $off={i === 3 || i === 4} />
          </React.Fragment>
        ))}
        <NewTab size={34} strokeWidth={3} />
      </TabStrip>

      <AddressBar>
        <NavButton>
          <ArrowLeft size={32} strokeWidth={2.2} />
        </NavButton>
        <NavButton $off>
          <ArrowRight size={32} strokeWidth={2.2} />
        </NavButton>
        <NavButton>
          <RotateCw size={32} strokeWidth={2.2} />
        </NavButton>
        <UrlPill>
          <svg width="16" height="24" viewBox="0 0 16 24">
            <path d="M4 10V6a4 4 0 0 1 8 0v4" fill="none" stroke="#5f6368" strokeWidth="2" />
            <rect x="1" y="10" width="14" height="13" rx="2" fill="#5f6368" />
          </svg>
          <Url>
            <UrlHost>cvilleschools.onshape.com</UrlHost>
            /documents/3a1bdd5c1be5c6a7f58a26c6/w/18f88a2d3e38a38b8f6c130f/e/05de034279c5cb281656371f
          </Url>
        </UrlPill>
      </AddressBar>
      <ProfileDot />

      <DocHeader>
        <LogoBox>
          <SchoolSeal />
        </LogoBox>
        <HeaderIcon>
          <svg width="32" height="32" viewBox="0 0 32 32">
            <path d="M0 1h32v6H0zM0 13h32v6H0zM0 25h32v6H0z" fill="#333" />
          </svg>
        </HeaderIcon>
        <HeaderIcon>
          <Glyph name="tree" size={40} />
        </HeaderIcon>
        <HeaderIcon $gap={26}>
          <Glyph name="insert" size={36} />
        </HeaderIcon>
        <DocTitle>Caster</DocTitle>
        <Branch>Main</Branch>
        <CapBadge>
          <GradCap />
        </CapBadge>
        <HeaderRight>
          <Glyph name="chat" size={40} />
          <HeaderButton $width={176}>App Store</HeaderButton>
          <HeaderButton $width={248}>Learning center</HeaderButton>
          <HeaderButton $width={124} $blue />
          <HeaderIcon $gap={22}>
            <svg width="36" height="36" viewBox="0 0 36 36">
              <circle cx="18" cy="18" r="17" fill="#666" />
            </svg>
          </HeaderIcon>
          <HeaderIcon $gap={44}>
            <svg width="46" height="46" viewBox="0 0 46 46">
              <circle cx="23" cy="23" r="23" fill="#1150ab" />
              <circle cx="23" cy="32" r="13" fill="#fff" />
            </svg>
          </HeaderIcon>
          <UserName>Callan Smith</UserName>
          <UserCaret />
        </HeaderRight>
      </DocHeader>

      <Notification>
        <CallInfo>
          <Avatar>
            <svg width="64" height="64" viewBox="0 0 64 64">
              <path d="M32 8c7 0 10 7 10 15 0 6-2 11-5 15 0 5 3 8 9 11 5 2 8 5 9 9-6 4-14 6-23 6s-17-2-23-6c1-4 4-7 9-9 6-3 9-6 9-11-3-4-5-9-5-15 0-8 3-15 10-15z" fill="#fff" />
            </svg>
          </Avatar>
          <CallText>
            <Caller>Aidan &amp; Reece</Caller>
            <CallKind>FaceTime</CallKind>
          </CallText>
        </CallInfo>
        <CallActions>
          <AcceptCell>Accept</AcceptCell>
          <DeclineCell>
            Decline
            <DeclineMenu>
              <svg width="14" height="10" viewBox="0 0 14 10">
                <path d="M2 2l5 6 5-6" fill="none" stroke="#fff" strokeWidth="1.800" />
              </svg>
            </DeclineMenu>
          </DeclineCell>
        </CallActions>
      </Notification>

      <Toolbar>
        <ToolGroup $gap={44}>
          <Glyph name="undo" size={30} />
          <Glyph name="redo" size={30} />
        </ToolGroup>
        <ToolSep />
        <Glyph name="sketch" size={40} />
        <SketchLabel>Sketch</SketchLabel>
        <ToolSep />
        <ToolGroup>
          <Glyph name="extrude" />
          <Glyph name="revolve" />
          <Glyph name="sweep" />
          <Glyph name="loft" />
          <WithMenu $tail={-5}>
            <Glyph name="thicken" />
            <Chevron />
          </WithMenu>
        </ToolGroup>
        <ToolSep />
        <ToolGroup>
          <Glyph name="fillet" />
          <Glyph name="chamfer" />
          <Glyph name="draft" />
          <Glyph name="rib" />
          <Glyph name="shell" />
          <Glyph name="hole" />
        </ToolGroup>
        <ToolSep />
        <ToolGroup>
          <WithMenu>
            <Glyph name="pattern" size={40} />
            <Chevron />
          </WithMenu>
          <Glyph name="mirror" />
        </ToolGroup>
        <ToolSep />
        <ToolGroup>
          <Glyph name="boolean" />
          <Glyph name="split" />
          <WithMenu>
            <Glyph name="transform" />
            <Chevron />
          </WithMenu>
          <Glyph name="deletePart" />
        </ToolGroup>
        <ToolSep />
        <ToolGroup>
          <Glyph name="modify" />
          <Glyph name="deleteFace" />
          <Glyph name="moveFace" />
          <Glyph name="replaceFace" />
        </ToolGroup>
        <ToolSep />
        <WithMenu>
          <Glyph name="plane" />
          <Chevron />
        </WithMenu>
        <ToolSep />
        <WithMenu $tail={-5}>
          <Glyph name="variable" />
          <Chevron />
        </WithMenu>
        <ToolSep />
        <Glyph name="mate" size={40} />
        <SearchBox>
          Search tools...
          <KeyCap $first>⌥</KeyCap>
          <KeyCap>C</KeyCap>
        </SearchBox>
      </Toolbar>

      <Workspace>
        <Panel>
          <PanelHead>
            <PanelTitle>Features (11)</PanelTitle>
            <Glyph name="folderPlus" size={36} />
            <PanelTool>
              <Glyph name="timer" size={36} />
            </PanelTool>
          </PanelHead>
          <FilterRow>
            <Glyph name="funnel" size={32} />
            <FilterInput>Filter by name or type</FilterInput>
          </FilterRow>

          <Row>
            <Caret viewBox="0 0 24 14">
              <path d="M2 2l10 9 10-9" />
            </Caret>
            Default geometry
          </Row>
          <TreeGroup>
            <Row $indent={30}>
              <OriginDot />
              Origin
            </Row>
            {["Top", "Front", "Right"].map((p) => (
              <Row key={p} $indent={30}>
                <Glyph name="plane" size={30} />
                {p}
              </Row>
            ))}
          </TreeGroup>
          {features.map((f) => (
            <Row key={f.label} $dim={f.dim}>
              <Glyph name={f.icon} size={32} faded={f.dim} />
              {f.label}
            </Row>
          ))}
          <FeatureScroll />
          <PartsDivider />
          <Row>
            <Caret viewBox="0 0 24 14">
              <path d="M2 2l10 9 10-9" />
            </Caret>
            Parts (1)
          </Row>
          <TreeGroup>
            <Row $indent={24}>Part 1</Row>
          </TreeGroup>

          <ListToggle>
            <Glyph name="listToggle" size={36} />
          </ListToggle>
        </Panel>

        <Viewport>
          <SketchPlane>
            <Wheel />
            <AxisV />
            <AxisH />
            <OriginMark />
            <PlaneName>Right</PlaneName>
          </SketchPlane>
          <ViewCube />
          <SidePalette>
            <SideCell>
              <Glyph name="appearance" size={40} />
            </SideCell>
            <SideCell>
              <Glyph name="partTable" size={40} />
            </SideCell>
            <SideCell $last>
              <Glyph name="configTable" size={40} />
            </SideCell>
          </SidePalette>
          <MeasureTools>
            <Glyph name="ruler" size={32} />
            <Glyph name="balance" size={32} />
          </MeasureTools>
        </Viewport>
      </Workspace>

      <BottomBar>
        <BarTools>
          <Glyph name="search" size={32} />
          <Plus size={36} strokeWidth={5} />
        </BarTools>
        {studioTabs.map((t) => (
          <DocTab key={t.label} $active={t.active}>
            <Glyph name={t.icon} size={34} />
            {t.label}
          </DocTab>
        ))}
      </BottomBar>
    </Page>
  );
}
